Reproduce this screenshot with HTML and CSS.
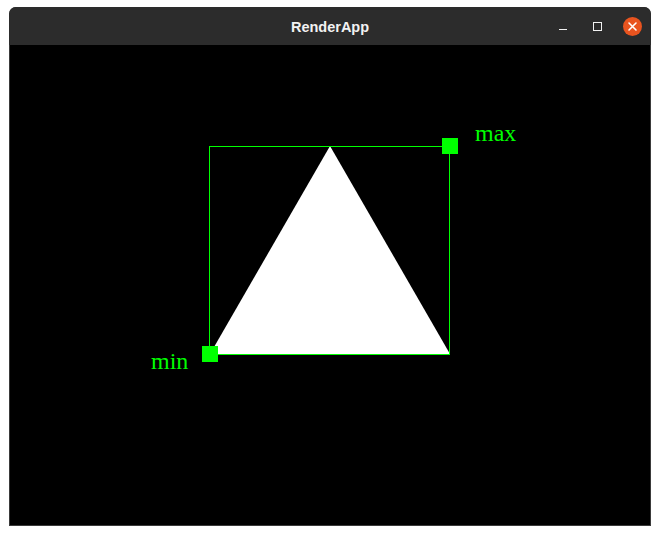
FILE: index.html
```html
<!DOCTYPE html>
<html>
<head>
<meta charset="utf-8">
<title>RenderApp</title>
<link rel="stylesheet" href="styles.css">
</head>
<body>
<div class="window">
  <div class="titlebar">
    <div class="spacer"></div>
    <div class="title">RenderApp</div>
    <div class="controls">
      <svg class="btn-min" width="8" height="8" viewBox="0 0 8 8"><line x1="0" y1="7.5" x2="8" y2="7.5" stroke="#f2f2f2" stroke-width="1"/></svg>
      <svg class="btn-max" width="9" height="9" viewBox="0 0 9 9"><rect x="0.5" y="0.5" width="8" height="8" fill="none" stroke="#f2f2f2" stroke-width="1"/></svg>
      <svg class="btn-close" width="19" height="19" viewBox="0 0 19 19"><circle cx="9.5" cy="9.5" r="9.5" fill="#e9541f"/><path d="M6 6 L13 13 M13 6 L6 13" stroke="#ffffff" stroke-width="1.6" stroke-linecap="round"/></svg>
    </div>
  </div>
  <div class="frame">
    <svg class="canvas" width="640" height="480" viewBox="0 0 640 480">
      <rect x="0" y="0" width="640" height="480" fill="#000"/>
      <polygon points="200,309 440,309 320,101" fill="#ffffff"/>
      <rect x="199.5" y="101.5" width="240" height="208" fill="none" stroke="#00ff00" stroke-width="1"/>
      <rect x="432" y="93" width="16" height="16" fill="#00ff00"/>
      <rect x="192" y="301" width="16" height="16" fill="#00ff00"/>
      <text class="label" x="465" y="96">max</text>
      <text class="label" x="141" y="324">min</text>
    </svg>
  </div>
</div>
</body>
</html>
```
FILE: styles.css
```css
html, body {
  margin: 0;
  padding: 0;
  background: #ffffff;
}
.window {
  margin: 7px 0 0 9px;
  width: 642px;
  border-radius: 7px 7px 0 0;
  overflow: hidden;
  background: #2c2c2c;
}
.titlebar {
  height: 38px;
  display: grid;
  grid-template-columns: 1fr auto 1fr;
  align-items: center;
  background: #2c2c2c;
}
.title {
  font-family: "Liberation Sans", Arial, sans-serif;
  font-weight: bold;
  font-size: 14.5px;
  color: #f2f2f2;
  padding-top: 1px;
}
.controls {
  display: flex;
  justify-content: flex-end;
  align-items: center;
  padding-right: 9px;
}
.controls svg {
  display: block;
}
.btn-min {
  margin-right: 26px;
  position: relative;
  top: 0px;
}
.btn-max {
  margin-right: 21px;
  position: relative;
  top: 0px;
}
.btn-close {
  position: relative;
  top: 0px;
}
.frame {
  padding: 0 1px 1px 1px;
  background: #3a3a3a;
}
.canvas {
  display: block;
}
.label {
  font-family: "Liberation Serif", "Times New Roman", serif;
  font-size: 24px;
  fill: #00ff00;
}
```
